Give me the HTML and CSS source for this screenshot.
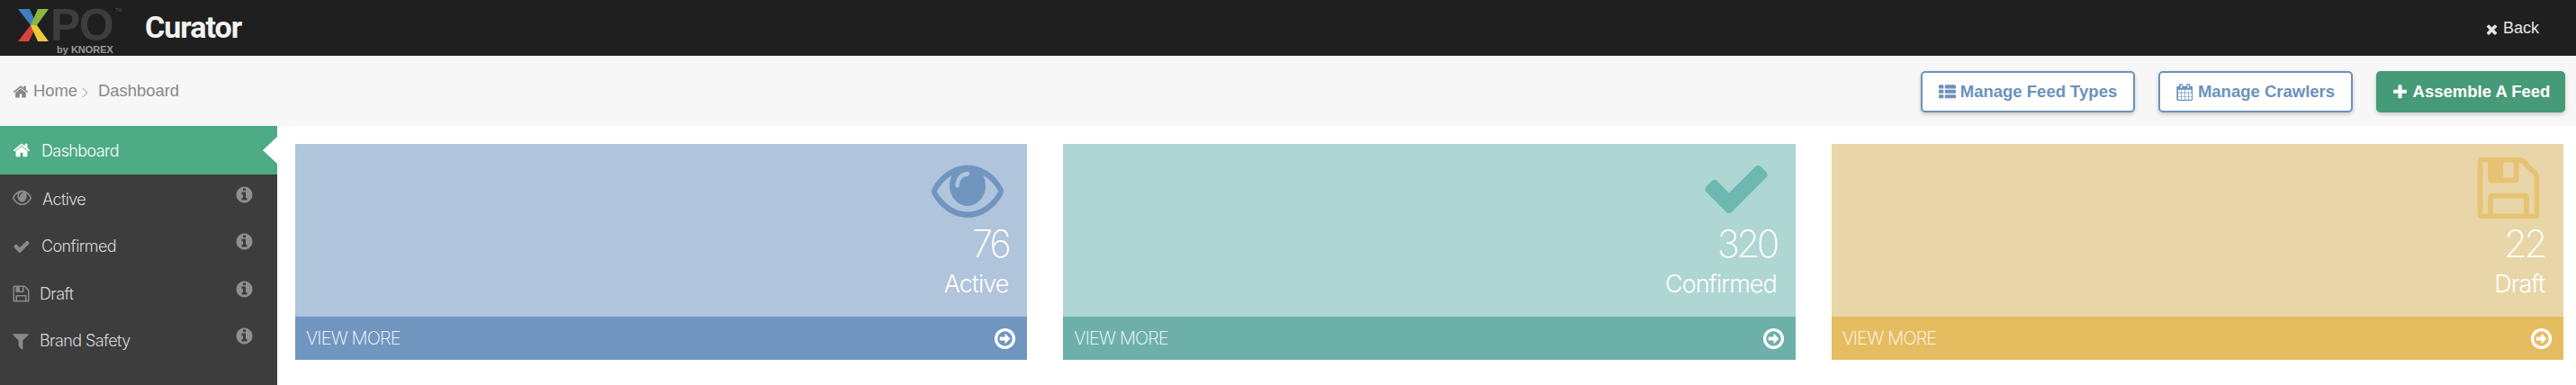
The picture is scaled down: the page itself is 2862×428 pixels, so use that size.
FILE: index.html
```html
<!DOCTYPE html>
<html lang="en">
  <head>
    <meta charset="UTF-8" />
    <title>Curator</title>
    <link rel="stylesheet" href="styles.css">
  </head>
  <body>
    <svg class="sprite" xmlns="http://www.w3.org/2000/svg">
      <symbol id="i-home" viewBox="0 0 1792 1792"><path d="M1472 992v480q0 26-19 45t-45 19h-384v-384h-256v384h-384q-26 0-45-19t-19-45v-480q0-1 .5-3t.5-3l575-474 575 474q1 2 1 6zm223-69l-62 74q-8 9-21 11h-3q-13 0-21-7l-692-577-692 577q-12 8-24 7-13-2-21-11l-62-74q-8-10-7-23.500t11-21.500l719-599q32-26 76-26t76 26l244 204v-195q0-14 9-23t23-9h192q14 0 23 9t9 23v408l219 182q10 8 11 21.500t-7 23.500z"/></symbol>
      <symbol id="i-check" viewBox="0 0 1792 1792"><path d="M1671 566q0 40-28 68l-724 724-136 136q-28 28-68 28t-68-28l-136-136-362-362q-28-28-28-68t28-68l136-136q28-28 68-28t68 28l294 295 656-657q28-28 68-28t68 28l136 136q28 28 28 68z"/></symbol>
      <symbol id="i-times" viewBox="0 0 1792 1792"><path d="M1490 1322q0 40-28 68l-136 136q-28 28-68 28t-68-28l-294-294-294 294q-28 28-68 28t-68-28l-136-136q-28-28-28-68t28-68l294-294-294-294q-28-28-28-68t28-68l136-136q28-28 68-28t68 28l294 294 294-294q28-28 68-28t68 28l136 136q28 28 28 68t-28 68l-294 294 294 294q28 28 28 68z"/></symbol>
      <symbol id="i-eye" viewBox="0 0 1792 1792" preserveAspectRatio="none"><path d="M1664 960q-152-236-381-353 61 104 61 225 0 185-131.500 316.500t-316.500 131.500-316.500-131.500-131.500-316.500q0-121 61-225-229 117-381 353 133 205 333.500 326.500t434.500 121.500 434.500-121.500 333.500-326.500zm-720-384q0-20-14-34t-34-14q-125 0-214.500 89.500t-89.500 214.500q0 20 14 34t34 14 34-14 14-34q0-86 61-147t147-61q20 0 34-14t14-34zm848 384q0 34-20 69-140 230-376.500 368.500t-499.500 138.500-499.500-139-376.500-368q-20-35-20-69t20-69q140-229 376.500-368t499.500-139 499.500 139 376.500 368q20 35 20 69z"/></symbol>
      <symbol id="i-filter" viewBox="0 0 1792 1792"><path d="M1595 295q17 41-14 70l-493 493v742q0 42-39 59-13 5-25 5-27 0-45-19l-256-256q-19-19-19-45v-486l-493-493q-31-29-14-70 17-39 59-39h1280q42 0 59 39z"/></symbol>
      <symbol id="i-floppy" viewBox="0 0 1792 1792"><path d="M512 1536h768v-384h-768v384zm896 0h128v-896q0-14-10-38.500t-20-34.500l-281-281q-10-10-34-20t-39-10v416q0 40-28 68t-68 28h-576q-40 0-68-28t-28-68v-416h-128v1280h128v-416q0-40 28-68t68-28h832q40 0 68 28t28 68v416zm-384-928v-320q0-13-9.500-22.500t-22.500-9.500h-192q-13 0-22.500 9.500t-9.500 22.500v320q0 13 9.500 22.500t22.500 9.500h192q13 0 22.500-9.500t9.500-22.500zm640 32v928q0 40-28 68t-68 28h-1344q-40 0-68-28t-28-68v-1344q0-40 28-68t68-28h928q40 0 88 20t76 48l280 280q28 28 48 76t20 88z"/></symbol>
      <symbol id="i-info" viewBox="0 0 1792 1792"><path d="M1152 1376v-160q0-14-9-23t-23-9h-96v-512q0-14-9-23t-23-9h-320q-14 0-23 9t-9 23v160q0 14 9 23t23 9h96v320h-96q-14 0-23 9t-9 23v160q0 14 9 23t23 9h448q14 0 23-9t9-23zm-128-896v-160q0-14-9-23t-23-9h-192q-14 0-23 9t-9 23v160q0 14 9 23t23 9h192q14 0 23-9t9-23zm640 416q0 209-103 385.500t-279.500 279.500-385.500 103-385.500-103-279.500-279.500-103-385.500 103-385.500 279.500-279.500 385.500-103 385.500 103 279.500 279.500 103 385.500z"/></symbol>
      <symbol id="i-arrow" viewBox="0 0 1792 1792"><path d="M1280 896q0 14-9 23l-320 320q-9 9-23 9-13 0-22.500-9.500t-9.500-22.500v-192h-352q-13 0-22.500-9.500t-9.500-22.500v-192q0-13 9.500-22.500t22.500-9.500h352v-192q0-14 9-23t23-9q12 0 24 10l319 319q9 9 9 23zm160 0q0-148-73-273t-198-198-273-73-273 73-198 198-73 273 73 273 198 198 273 73 273-73 198-198 73-273zm224 0q0 209-103 385.500t-279.500 279.500-385.500 103-385.500-103-279.500-279.500-103-385.500 103-385.500 279.500-279.500 385.500-103 385.500 103 279.500 279.500 103 385.500z"/></symbol>
      <symbol id="i-list" viewBox="0 0 1792 1792"><path d="M512 1248v192q0 40-28 68t-68 28h-320q-40 0-68-28t-28-68v-192q0-40 28-68t68-28h320q40 0 68 28t28 68zm0-512v192q0 40-28 68t-68 28h-320q-40 0-68-28t-28-68v-192q0-40 28-68t68-28h320q40 0 68 28t28 68zm1280 512v192q0 40-28 68t-68 28h-960q-40 0-68-28t-28-68v-192q0-40 28-68t68-28h960q40 0 68 28t28 68zm-1280-1024v192q0 40-28 68t-68 28h-320q-40 0-68-28t-28-68v-192q0-40 28-68t68-28h320q40 0 68 28t28 68zm1280 512v192q0 40-28 68t-68 28h-960q-40 0-68-28t-28-68v-192q0-40 28-68t68-28h960q40 0 68 28t28 68zm0-512v192q0 40-28 68t-68 28h-960q-40 0-68-28t-28-68v-192q0-40 28-68t68-28h960q40 0 68 28t28 68z"/></symbol>
      <symbol id="i-calendar" viewBox="0 0 1792 1792"><path d="M192 1664h288v-288h-288v288zm352 0h320v-288h-320v288zm-352-352h288v-320h-288v320zm352 0h320v-320h-320v320zm-352-384h288v-288h-288v288zm736 736h320v-288h-320v288zm-384-736h320v-288h-320v288zm768 736h288v-288h-288v288zm-384-352h320v-320h-320v320zm-352-864v-288q0-13-9.500-22.500t-22.500-9.500h-64q-13 0-22.500 9.500t-9.500 22.500v288q0 13 9.500 22.500t22.500 9.500h64q13 0 22.500-9.500t9.500-22.500zm736 864h288v-320h-288v320zm-384-384h320v-288h-320v288zm352 0h288v-288h-288v288zm32-480v-288q0-13-9.500-22.500t-22.500-9.500h-64q-13 0-22.500 9.500t-9.500 22.500v288q0 13 9.500 22.500t22.500 9.500h64q13 0 22.500-9.500t9.500-22.500zm384-64v1280q0 52-38 90t-90 38h-1408q-52 0-90-38t-38-90v-1280q0-52 38-90t90-38h128v-96q0-66 47-113t113-47h64q66 0 113 47t47 113v96h384v-96q0-66 47-113t113-47h64q66 0 113 47t47 113v96h128q52 0 90 38t38 90z"/></symbol>
      <symbol id="i-plus" viewBox="0 0 1792 1792"><path d="M1600 736v192q0 40-28 68t-68 28h-416v416q0 40-28 68t-68 28h-192q-40 0-68-28t-28-68v-416h-416q-40 0-68-28t-28-68v-192q0-40 28-68t68-28h416v-416q0-40 28-68t68-28h192q40 0 68 28t28 68v416h416q40 0 68 28t28 68z"/></symbol>
    </svg>

    <header class="topbar">
      <div class="logo">
        <svg class="logoX" viewBox="0 0 34 36" xmlns="http://www.w3.org/2000/svg">
          <polygon points="0,0 13,0 21,18 14,18" fill="#3f7fc4"/>
          <polygon points="34,0 22,0 14,18 21,18" fill="#8ab83f"/>
          <polygon points="0,36 12,36 21,18 14,18" fill="#d8443c"/>
          <polygon points="34,36 22,36 14,18 21,18" fill="#ecc93a"/>
        </svg>
        <span class="logoPo">PO</span>
        <span class="logoTm">TM</span>
        <span class="logoBy">by KNOREX</span>
      </div>
      <span class="appName">Curator</span>
      <a class="back"><svg class="backIcon"><use href="#i-times"/></svg>Back</a>
    </header>

    <div class="crumbBar">
      <nav class="crumbs">
        <svg class="crumbHome"><use href="#i-home"/></svg>
        <span>Home</span>
        <svg class="crumbSep" viewBox="0 0 7 12"><polyline points="1,1 6,6 1,11"/></svg>
        <span>Dashboard</span>
      </nav>
      <div class="actions">
        <button class="btn btnOutline btnTypes"><svg><use href="#i-list"/></svg>Manage Feed Types</button>
        <button class="btn btnOutline btnCrawlers"><svg><use href="#i-calendar"/></svg>Manage Crawlers</button>
        <button class="btn btnGreen"><svg><use href="#i-plus"/></svg>Assemble A Feed</button>
      </div>
    </div>

    <div class="content">
      <aside class="sidebar">
        <a class="sideItem selected"><svg class="sideIcon homeIcon"><use href="#i-home"/></svg><span>Dashboard</span></a>
        <ul class="sideList">
          <li class="sideItem"><svg class="sideIcon eyeIcon"><use href="#i-eye"/></svg><span>Active</span><svg class="infoIcon"><use href="#i-info"/></svg></li>
          <li class="sideItem"><svg class="sideIcon checkIcon"><use href="#i-check"/></svg><span>Confirmed</span><svg class="infoIcon"><use href="#i-info"/></svg></li>
          <li class="sideItem"><svg class="sideIcon floppyIcon"><use href="#i-floppy"/></svg><span>Draft</span><svg class="infoIcon"><use href="#i-info"/></svg></li>
          <li class="sideItem"><svg class="sideIcon filterIcon"><use href="#i-filter"/></svg><span>Brand Safety</span><svg class="infoIcon"><use href="#i-info"/></svg></li>
        </ul>
      </aside>

      <main class="tiles">
        <article class="tile blue">
          <div class="tileBody">
            <svg class="tileIcon tileEye"><use href="#i-eye"/></svg>
            <p class="tileCount">76</p>
            <p class="tileLabel">Active</p>
          </div>
          <a class="tileFoot"><span>VIEW MORE</span><svg><use href="#i-arrow"/></svg></a>
        </article>
        <article class="tile teal">
          <div class="tileBody">
            <svg class="tileIcon"><use href="#i-check"/></svg>
            <p class="tileCount">320</p>
            <p class="tileLabel">Confirmed</p>
          </div>
          <a class="tileFoot"><span>VIEW MORE</span><svg><use href="#i-arrow"/></svg></a>
        </article>
        <article class="tile gold">
          <div class="tileBody">
            <svg class="tileIcon tileFloppy"><use href="#i-floppy"/></svg>
            <p class="tileCount">22</p>
            <p class="tileLabel">Draft</p>
          </div>
          <a class="tileFoot"><span>VIEW MORE</span><svg><use href="#i-arrow"/></svg></a>
        </article>
      </main>
    </div>
  </body>
</html>
```

FILE: styles.css
```css
* {
  box-sizing: border-box;
}
html,
body {
  margin: 0;
  height: 428px;
  overflow: hidden;
  background: #fff;
  font-family: "Liberation Sans", Arial, sans-serif;
}
.sprite {
  display: none;
}
svg {
  fill: currentColor;
  flex: none;
}

/* top bar */
.topbar {
  height: 62px;
  background: #1f1f1f;
  display: flex;
  align-items: center;
  padding: 0 41px 0 20px;
}
.logo {
  position: relative;
  width: 141px;
  height: 62px;
}
.logoX {
  position: absolute;
  left: 0;
  top: 10px;
  width: 34px;
  height: 36px;
}
.logoPo {
  position: absolute;
  left: 36px;
  top: 8px;
  font-size: 50px;
  line-height: 40px;
  letter-spacing: -1.5px;
  font-weight: 700;
  color: #3e3d3d;
}
.logoTm {
  position: absolute;
  left: 108px;
  top: 8px;
  font-size: 5px;
  color: #555;
}
.logoBy {
  position: absolute;
  left: 43px;
  top: 49px;
  font-size: 11px;
  line-height: 12px;
  font-weight: 700;
  color: #9a9a9a;
  white-space: nowrap;
}
.appName {
  font-family: Roboto, sans-serif;
  font-weight: 700;
  font-size: 34px;
  letter-spacing: -1px;
  margin-bottom: 3px;
  color: #f2f2f2;
}
.back {
  margin-left: auto;
  display: flex;
  align-items: center;
  gap: 4px;
  font-size: 18px;
  color: #e4e4e4;
}
.backIcon {
  width: 17px;
  height: 17px;
  margin-top: 3px;
}

/* breadcrumb row */
.crumbBar {
  height: 78px;
  background: #f7f7f7;
  display: flex;
  align-items: center;
  justify-content: space-between;
  padding: 0 12px 0 14px;
}
.crumbs {
  display: flex;
  align-items: center;
  font-size: 18.4px;
  color: #888;
}
.crumbHome {
  width: 18px;
  height: 18px;
  margin-right: 5px;
  margin-top: 2px;
}
.crumbSep {
  width: 7px;
  height: 12px;
  margin: 3px 11px 0 5px;
  fill: none;
  stroke: #999;
  stroke-width: 1;
}
.actions {
  display: flex;
  gap: 26px;
  margin-top: 2px;
}
.btn {
  height: 46px;
  border-radius: 5px;
  display: flex;
  align-items: center;
  justify-content: center;
  gap: 5px;
  font-family: "Liberation Sans", Arial, sans-serif;
  font-size: 18.5px;
  font-weight: 700;
  padding: 0;
  box-shadow: 0 2px 4px rgba(0, 0, 0, 0.2);
}
.btn svg {
  width: 19px;
  height: 19px;
}
.btnOutline {
  background: #fff;
  border: 2px solid #6b92bd;
  color: #6b92bd;
}
.btnTypes {
  width: 238px;
}
.btnCrawlers {
  width: 216px;
}
.btnGreen {
  width: 210px;
  background: #459a78;
  border: 0;
  color: #fff;
}

/* sidebar and tiles */
.content {
  display: flex;
  height: 288px;
}
.sidebar {
  width: 308px;
  flex: none;
  background: #3d3d3d;
}
.sideItem {
  display: flex;
  align-items: center;
  gap: 12px;
  height: 52.5px;
  padding-left: 14px;
  font-family: Inter, sans-serif;
  font-weight: 300;
  font-size: 18px;
  letter-spacing: -0.6px;
  color: #d8d8d8;
}
.selected {
  position: relative;
  height: 54px;
  background: #4dab85;
  color: #fff;
}
.selected::after {
  content: "";
  position: absolute;
  right: 0;
  top: 12px;
  border-style: solid;
  border-width: 15px 16px 15px 0;
  border-color: transparent #fff transparent transparent;
}
.sideList {
  list-style: none;
  margin: 0;
  padding: 1px 0 0;
}
.sideIcon {
  width: 20px;
  height: 20px;
  color: #8a8a8a;
}
.homeIcon {
  color: #fff;
}
.eyeIcon {
  width: 21px;
  height: 26px;
  margin-top: -4px;
}
.floppyIcon {
  width: 21px;
  height: 21px;
  margin: 0 -1.5px;
}
.filterIcon {
  width: 22px;
  height: 22px;
  margin: 0 -2px;
}
.infoIcon {
  width: 21px;
  height: 21px;
  margin: -10px 26px 0 auto;
  color: #8f8f8f;
}
.tiles {
  flex: 1;
  display: grid;
  grid-template-columns: repeat(3, 1fr);
  column-gap: 40px;
  padding: 20px 14px 28px 20px;
}
.tile {
  display: flex;
  flex-direction: column;
  color: #fff;
}
.tileBody {
  flex: 1;
  display: flex;
  flex-direction: column;
  align-items: flex-end;
  padding: 9px 21px 0 0;
}
.tileIcon {
  width: 80px;
  height: 80px;
  margin-right: 5px;
}
.tileEye {
  height: 91px;
  margin: -5px 5px -6px 0;
}
.tileFloppy {
  margin-right: 0;
}
.tileCount {
  margin: -2px 0 0;
  font-family: Inter, sans-serif;
  font-weight: 200;
  font-size: 42px;
  line-height: 48px;
  letter-spacing: -3.4px;
}
.tileLabel {
  margin: 2px 0 0;
  font-family: Inter, sans-serif;
  font-weight: 300;
  font-size: 27px;
  line-height: 38px;
  letter-spacing: -1px;
}
.tileFoot {
  height: 48px;
  display: flex;
  align-items: center;
  justify-content: space-between;
  padding: 0 11px 0 12px;
  font-family: Inter, sans-serif;
  font-weight: 200;
  font-size: 20px;
  letter-spacing: -0.8px;
}
.tileFoot svg {
  width: 27px;
  height: 27px;
}
.blue .tileBody {
  background: #b0c4dc;
}
.blue .tileFoot {
  background: #7096bf;
}
.blue .tileIcon {
  color: #7096bf;
}
.teal .tileBody {
  background: #aed6d3;
}
.teal .tileFoot {
  background: #6db0aa;
}
.teal .tileIcon {
  color: #6db9b2;
}
.gold .tileBody {
  background: #e8d6a8;
}
.gold .tileFoot {
  background: #e6bc60;
}
.gold .tileIcon {
  color: #e6c373;
}
```
